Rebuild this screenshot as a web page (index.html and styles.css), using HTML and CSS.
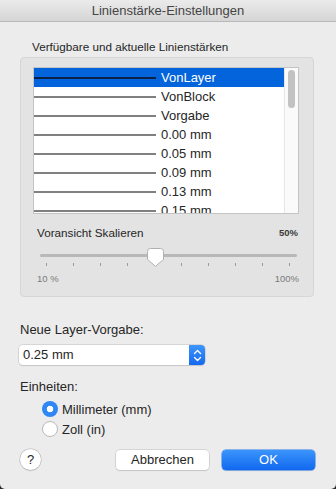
FILE: index.html
```
<html>

<head>
    <title>Linienstärke-Einstellungen</title>
    <link rel="stylesheet" href="styles.css">
</head>

<body>
    <div class="window">
        <div class="titlebar">Linienstärke-Einstellungen</div>

        <div class="content">
            <div class="group_label">Verfügbare und aktuelle Linienstärken</div>
            <div class="group_box">
                <div class="list">
                    <div class="rows">
                        <div class="row selected"><span class="line"></span><span>VonLayer</span></div>
                        <div class="row"><span class="line"></span><span>VonBlock</span></div>
                        <div class="row"><span class="line"></span><span>Vorgabe</span></div>
                        <div class="row"><span class="line"></span><span>0.00 mm</span></div>
                        <div class="row"><span class="line"></span><span>0.05 mm</span></div>
                        <div class="row"><span class="line"></span><span>0.09 mm</span></div>
                        <div class="row"><span class="line"></span><span>0.13 mm</span></div>
                        <div class="row"><span class="line"></span><span>0.15 mm</span></div>
                    </div>
                    <div class="scrollbar"><div class="thumb"></div></div>
                </div>

                <div class="scale_head">
                    <span>Voransicht Skalieren</span>
                    <span class="scale_value">50%</span>
                </div>
                <div class="slider">
                    <div class="track"></div>
                    <svg class="knob" width="17" height="19" viewBox="0 0 17 19">
                        <path d="M3.5 0.5 H13.5 Q16.5 0.5 16.5 3.5 V11.5 L8.5 18.3 L0.5 11.5 V3.5 Q0.5 0.5 3.5 0.5 Z"
                            fill="#ffffff" stroke="#b0b0b0" stroke-width="1" />
                    </svg>
                    <div class="ticks">
                        <i></i><i></i><i></i><i></i><i></i><i></i><i></i><i></i><i></i><i></i>
                    </div>
                    <div class="slider_labels">
                        <span>10 %</span>
                        <span>100%</span>
                    </div>
                </div>
            </div>

            <div class="field_label">Neue Layer-Vorgabe:</div>
            <div class="popup">
                <span class="popup_text">0.25 mm</span>
                <span class="popup_arrows">
                    <svg width="9" height="13" viewBox="0 0 9 13">
                        <path d="M1.5 4.5 L4.5 1.5 L7.5 4.5 M1.5 8.5 L4.5 11.5 L7.5 8.5" fill="none" stroke="#ffffff"
                            stroke-width="1.4" stroke-linecap="round" stroke-linejoin="round" />
                    </svg>
                </span>
            </div>

            <div class="field_label units_label">Einheiten:</div>
            <div class="radios">
                <div class="radio_row"><span class="radio checked"></span>Millimeter (mm)</div>
                <div class="radio_row"><span class="radio"></span>Zoll (in)</div>
            </div>

            <div class="buttons">
                <div class="help">?</div>
                <div class="button_gap"></div>
                <div class="button">Abbrechen</div>
                <div class="button default">OK</div>
            </div>
        </div>
    </div>
</body>

</html>
```

FILE: styles.css
```
body {
    margin: 0;
    background-color: #2a2a2a;
    font-family: 'Liberation Sans', Arial, sans-serif;
    color: #262626;
}

.window {
    width: 336px;
    height: 489px;
    background-color: #ececec;
    border-radius: 0 0 5px 5px;
    overflow: hidden;
}

.titlebar {
    height: 21px;
    line-height: 22px;
    text-align: center;
    font-size: 13px;
    color: #454545;
    background: linear-gradient(#ebebeb, #d5d5d5);
    border-bottom: 1px solid #b8b8b8;
}

.content {
    padding: 0 20px;
}

.group_label {
    font-size: 11.7px;
    line-height: 14px;
    margin-top: 18px;
    padding-left: 12px;
}

.group_box {
    margin-top: 3px;
    width: 294px;
    height: 240px;
    background-color: #e3e3e3;
    border: 1px solid #d6d6d6;
    border-radius: 4px;
    padding-top: 9px;
    padding-left: 12px;
    box-sizing: border-box;
}

.list {
    display: flex;
    width: 266px;
    height: 147px;
    background-color: #ffffff;
    border: 1px solid #c4c4c4;
    box-sizing: border-box;
    overflow: hidden;
}

.rows {
    flex: 1;
}

.row {
    display: flex;
    align-items: center;
    height: 19px;
    font-size: 13px;
}

.row .line {
    width: 122px;
    height: 2px;
    margin-right: 5px;
    background-color: #808080;
}

.row.selected {
    background-color: #0464dc;
    color: #ffffff;
}

.row.selected .line {
    background-color: #0b2148;
}

.scrollbar {
    width: 14px;
    background-color: #fafafa;
    border-left: 1px solid #e6e6e6;
    padding-top: 2px;
    padding-left: 3px;
    box-sizing: border-box;
}

.thumb {
    width: 7px;
    height: 38px;
    border-radius: 4px;
    background-color: #c2c2c2;
}

.scale_head {
    display: flex;
    justify-content: space-between;
    align-items: center;
    width: 266px;
    padding: 0 1px 0 4px;
    box-sizing: border-box;
    margin-top: 12px;
    font-size: 11.7px;
    line-height: 14px;
}

.scale_value {
    font-size: 9.5px;
    font-weight: bold;
    color: #3a3a3a;
}

.slider {
    position: relative;
    width: 266px;
    margin-top: 8px;
    padding-top: 6px;
}

.track {
    margin-left: 7px;
    width: 257px;
    height: 3px;
    border-radius: 2px;
    background-color: #b8b8b8;
}

.knob {
    position: absolute;
    left: 114px;
    top: 0;
}

.ticks {
    display: flex;
    justify-content: space-between;
    margin-left: 13px;
    width: 244px;
    margin-top: 6px;
}

.ticks i {
    width: 1px;
    height: 3px;
    background-color: #9a9a9a;
}

.slider_labels {
    display: flex;
    justify-content: space-between;
    width: 266px;
    padding: 0 0 0 4px;
    box-sizing: border-box;
    margin-top: 7px;
    font-size: 9.5px;
    color: #7a7a7a;
}

.field_label {
    font-size: 13px;
    line-height: 16px;
    margin-top: 25px;
}

.popup {
    display: flex;
    margin-top: 7px;
    margin-left: -1px;
    width: 186px;
    height: 20px;
    border-radius: 4px;
    background-color: #ffffff;
    box-shadow: 0 0 0 0.5px #bdbdbd, 0 1px 1px rgba(0, 0, 0, 0.12);
    overflow: hidden;
}

.popup_text {
    flex: 1;
    font-size: 13px;
    line-height: 20px;
    padding-left: 4px;
}

.popup_arrows {
    width: 16px;
    display: flex;
    align-items: center;
    justify-content: center;
    background: linear-gradient(#3d96fb, #1469f0);
}

.units_label {
    margin-top: 14px;
}

.radios {
    margin-top: 4px;
    padding-left: 22px;
}

.radio_row {
    display: flex;
    align-items: center;
    height: 20px;
    font-size: 13px;
}

.radio {
    width: 14px;
    height: 14px;
    border-radius: 50%;
    background-color: #ffffff;
    border: 1px solid #b9b9b9;
    margin-right: 4px;
    box-sizing: content-box;
}

.radio.checked {
    width: 16px;
    height: 16px;
    border: none;
    background: radial-gradient(circle, #ffffff 0, #ffffff 3px, #2f86f5 3.6px);
}

.buttons {
    display: flex;
    align-items: center;
    margin-top: 10px;
    padding-right: 1px;
}

.help {
    width: 21px;
    height: 21px;
    border-radius: 50%;
    background-color: #ffffff;
    box-shadow: 0 0 0 0.5px #b5b5b5, 0 1px 1px rgba(0, 0, 0, 0.15);
    text-align: center;
    line-height: 21px;
    font-size: 13px;
}

.button_gap {
    flex: 1;
}

.button {
    width: 93px;
    height: 20px;
    line-height: 20px;
    text-align: center;
    font-size: 13px;
    border-radius: 4px;
    background-color: #ffffff;
    box-shadow: 0 0 0 0.5px #bdbdbd, 0 1px 1px rgba(0, 0, 0, 0.12);
    margin-left: 13px;
}

.button.default {
    margin-left: 13px;
    color: #ffffff;
    background: linear-gradient(#3b95fb, #1268ef);
    box-shadow: 0 0 0 0.5px #2a78e8, 0 1px 1px rgba(0, 0, 0, 0.12);
}
```
